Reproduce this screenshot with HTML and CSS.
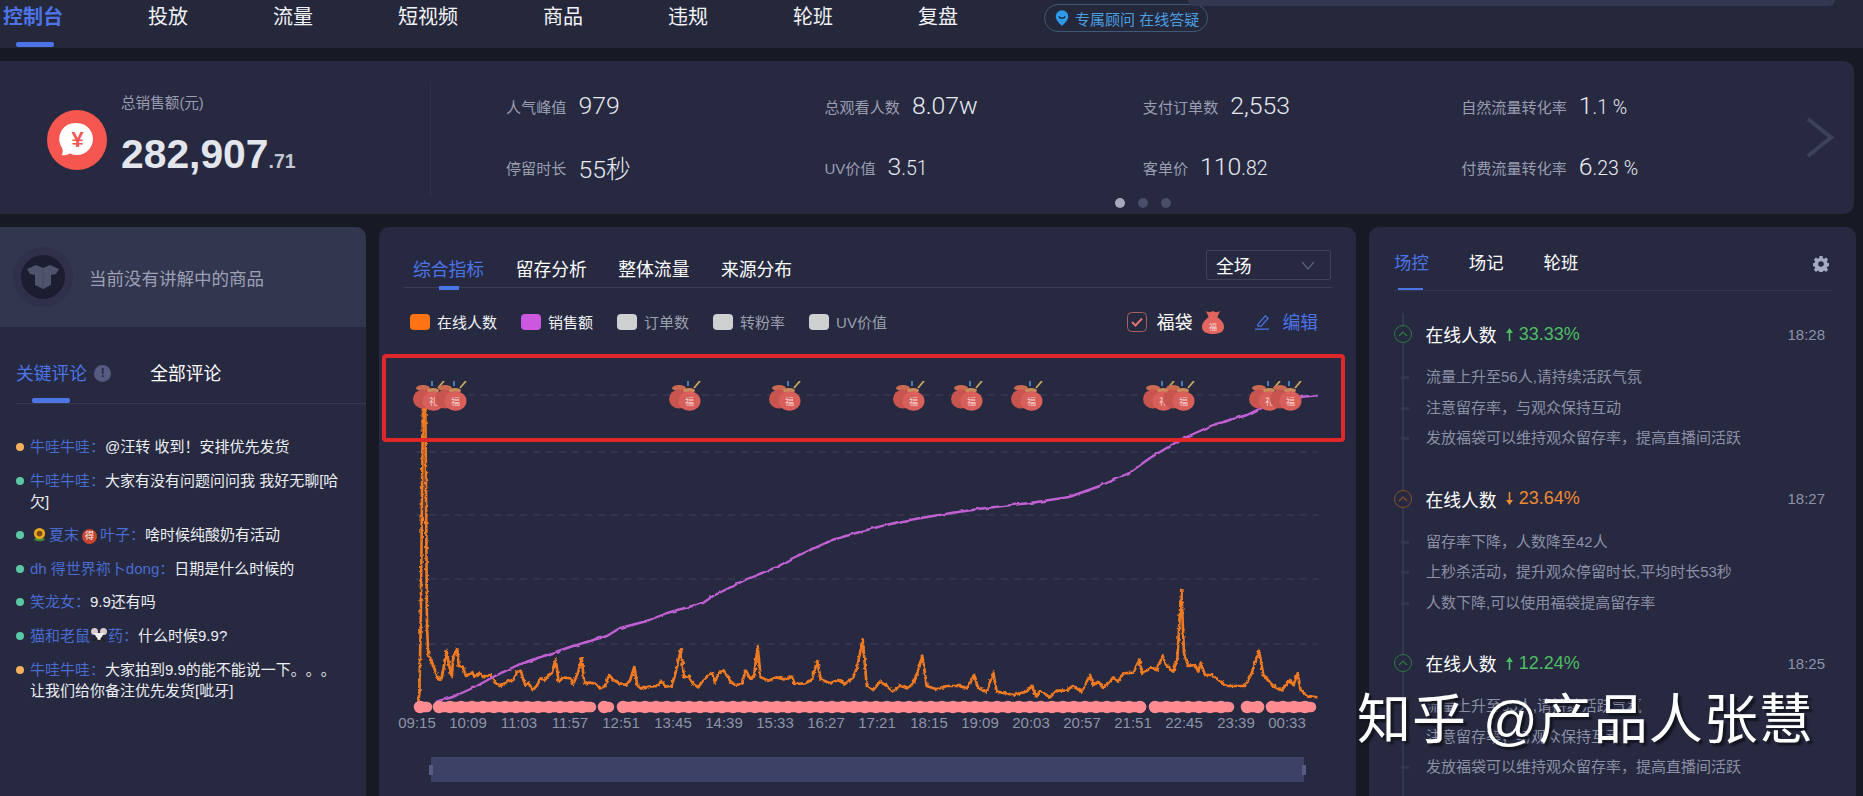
FILE: index.html
```html
<!DOCTYPE html>
<html lang="zh-CN">
<head>
  <meta charset="UTF-8">
  <meta name="viewport" content="width=device-width, initial-scale=1.0">
  <title>直播大屏 控制台</title>
  <link rel="stylesheet" href="styles.css">
</head>
<body>
  <!-- 顶部导航 -->
  <header class="topbar">
    <div class="search-strip"></div>
    <nav class="nav">
      <a class="nav-item active">控制台</a>
      <a class="nav-item">投放</a>
      <a class="nav-item">流量</a>
      <a class="nav-item">短视频</a>
      <a class="nav-item">商品</a>
      <a class="nav-item">违规</a>
      <a class="nav-item">轮班</a>
      <a class="nav-item">复盘</a>
      <div class="advisor">
        <svg class="advisor-icon" viewBox="0 0 18 22"><path d="M9 1a8 8 0 0 1 8 8c0 5-5 9-8 12C6 18 1 14 1 9a8 8 0 0 1 8-8z" fill="#2f9be8"/><path d="M5 9c1 3 7 3 8 0" fill="none" stroke="#123" stroke-width="1.6"/></svg>
        <span>专属顾问 在线答疑</span>
      </div>
    </nav>
  </header>

  <!-- 数据总览 -->
  <section class="stats">
    <div class="summary">
      <svg class="money-icon" viewBox="0 0 60 60">
        <circle cx="30" cy="30" r="30" fill="#f5564f"/>
        <path d="M30 13a16 16 0 1 1-7 30.4C20 45 17 45.500 14.500 45c1.500-2 1.500-4 .8-6.500A16 16 0 0 1 30 13z" fill="#fff"/>
        <text class="money-sign" x="30.500" y="37">¥</text>
      </svg>
      <div class="summary-text">
        <div class="summary-label">总销售额(元)</div>
        <div class="summary-value">282,907<small>.71</small></div>
      </div>
    </div>
    <div class="stat-grid">
      <div class="stat"><span class="stat-label">人气峰值</span><span class="stat-value">979</span></div>
      <div class="stat"><span class="stat-label">总观看人数</span><span class="stat-value">8.07w</span></div>
      <div class="stat"><span class="stat-label">支付订单数</span><span class="stat-value">2,553</span></div>
      <div class="stat"><span class="stat-label">自然流量转化率</span><span class="stat-value">1<small>.1 %</small></span></div>
      <div class="stat"><span class="stat-label">停留时长</span><span class="stat-value">55秒</span></div>
      <div class="stat"><span class="stat-label">UV价值</span><span class="stat-value">3<small>.51</small></span></div>
      <div class="stat"><span class="stat-label">客单价</span><span class="stat-value">110<small>.82</small></span></div>
      <div class="stat"><span class="stat-label">付费流量转化率</span><span class="stat-value">6<small>.23 %</small></span></div>
    </div>
    <svg class="stats-next" viewBox="0 0 28 41"><path d="M2 2l23 18.500L2 39" fill="none" stroke="#3e4259" stroke-width="4"/></svg>
    <div class="dots"><i class="on"></i><i></i><i></i></div>
  </section>

  <main class="panels">
    <!-- 左栏 评论 -->
    <aside class="panel panel-left">
      <div class="product-now">
        <div class="product-avatar">
          <svg viewBox="0 0 44 44"><path d="M6 14l9-4 7 3 7-3 9 4-3 5-5 1v10l-8 4-8-4V20l-5-1z" fill="#50536c"/><path d="M22 14v20" stroke="#45485f" stroke-width="1"/></svg>
        </div>
        <span>当前没有讲解中的商品</span>
      </div>
      <div class="comment-tabs">
        <span class="comment-tab active">关键评论</span>
        <span class="info-mark">!</span>
        <span class="comment-tab all">全部评论</span>
      </div>
      <ul class="comments">
        <li class="comment"><i class="mark orange"></i><p><span class="who">牛哇牛哇：</span>@汪转 收到！安排优先发货</p></li>
        <li class="comment"><i class="mark green"></i><p><span class="who">牛哇牛哇：</span>大家有没有问题问问我 我好无聊[哈欠]</p></li>
        <li class="comment"><i class="mark green"></i><p><span class="who"><svg class="emoji" viewBox="0 0 16 16"><path d="M2 13c3-2 9-2 12 0-2 3-10 3-12 0z" fill="#3f8a3a"/><circle cx="8" cy="7" r="6" fill="#e8a820"/><circle cx="8" cy="7" r="3" fill="#7a4a1c"/></svg>夏末<span class="badge">得</span>叶子：</span>啥时候纯酸奶有活动</p></li>
        <li class="comment"><i class="mark green"></i><p><span class="who">dh 得世界祢卜dong：</span>日期是什么时候的</p></li>
        <li class="comment"><i class="mark green"></i><p><span class="who">笑龙女：</span>9.9还有吗</p></li>
        <li class="comment"><i class="mark green"></i><p><span class="who">猫和老鼠<svg class="emoji mouse" viewBox="0 0 16 16"><circle cx="3.500" cy="4.500" r="3.500" fill="#d9c8cc"/><circle cx="12.500" cy="4.500" r="3.500" fill="#d9c8cc"/><path d="M3 6h10l-5 9z" fill="#f1ecee"/><path d="M2 14l4-3M14 14l-4-3" stroke="#222" stroke-width="2"/><circle cx="8" cy="14" r="1.200" fill="#222"/></svg>药：</span>什么时候9.9?</p></li>
        <li class="comment"><i class="mark orange"></i><p><span class="who">牛哇牛哇：</span>大家拍到9.9的能不能说一下。。。让我们给你备注优先发货[呲牙]</p></li>
      </ul>
    </aside>

    <!-- 中栏 图表 -->
    <section class="panel panel-chart">
      <div class="chart-tabs">
        <span class="chart-tab active">综合指标</span>
        <span class="chart-tab">留存分析</span>
        <span class="chart-tab">整体流量</span>
        <span class="chart-tab">来源分布</span>
        <div class="range-select">
          <span>全场</span>
          <svg viewBox="0 0 14 9"><path d="M1 1l6 7 6-7" fill="none" stroke="#5c6078" stroke-width="1.200"/></svg>
        </div>
      </div>
      <div class="legend">
        <span class="legend-item"><i class="swatch swatch-orange"></i><span class="legend-text">在线人数</span></span>
        <span class="legend-item"><i class="swatch swatch-purple"></i><span class="legend-text">销售额</span></span>
        <span class="legend-item off"><i class="swatch"></i><span class="legend-text">订单数</span></span>
        <span class="legend-item off"><i class="swatch"></i><span class="legend-text">转粉率</span></span>
        <span class="legend-item off"><i class="swatch"></i><span class="legend-text">UV价值</span></span>
        <span class="lucky">
          <svg class="check" viewBox="0 0 20 20"><rect x=".5" y=".5" width="19" height="19" rx="4" fill="none" stroke="#a5605f"/><path d="M5 10l3.500 3.500L15 6.500" fill="none" stroke="#e0746c" stroke-width="2"/></svg>
          <span class="legend-text">福袋</span>
          <svg class="lucky-bag" viewBox="0 0 22 24"><path d="M4 1c2 1.500 5 1.500 7 0 2 1.500 5 1.500 7 0l-3 7H7z" fill="#e0645c"/><path d="M7 7h8c5 3 7 7 7 10 0 5-5 7-11 7S0 22 0 17c0-3 2-7 7-10z" fill="#e2665f"/><text class="lucky-char" x="11" y="20">福</text></svg>
        </span>
        <span class="edit">
          <svg viewBox="0 0 16 17"><path d="M3 11L11 2l3 2.500L6.500 13H3zM0 16h15" fill="none" stroke="#4c74e6" stroke-width="1.300"/></svg>
          <span class="legend-text">编辑</span>
        </span>
      </div>

      <svg class="chart" viewBox="379 345 977 451">
        <defs>
          <filter id="jitter" filterUnits="userSpaceOnUse" x="379" y="345" width="977" height="451">
            <feTurbulence type="fractalNoise" baseFrequency=".28" numOctaves="2" seed="7"/>
            <feDisplacementMap in="SourceGraphic" scale="3.500" xChannelSelector="R" yChannelSelector="G"/>
          </filter>
          <filter id="jitter-soft" filterUnits="userSpaceOnUse" x="379" y="345" width="977" height="451">
            <feTurbulence type="fractalNoise" baseFrequency=".12" numOctaves="2" seed="3"/>
            <feDisplacementMap in="SourceGraphic" scale="3" xChannelSelector="R" yChannelSelector="G"/>
          </filter>
          <g id="bag-body">
            <path d="M19 0v5" stroke="#4a86c8" stroke-width="1.800" fill="none"/>
            <path d="M25 7l6-7" stroke="#c9a95e" stroke-width="1.800" fill="none"/>
            <ellipse cx="10" cy="7" rx="7" ry="3" fill="#cc6a52"/>
            <ellipse cx="10" cy="18" rx="10" ry="9.500" fill="#c8544f"/>
            <ellipse cx="20" cy="9.500" rx="6" ry="2.600" fill="#c98a5c"/>
            <ellipse cx="20.500" cy="20" rx="11" ry="9.800" fill="#d95f5a"/>
          </g>
          <symbol id="bag" viewBox="0 0 32 30"><use href="#bag-body"/><text class="bag-char" x="20.500" y="24">福</text></symbol>
          <symbol id="bag-li" viewBox="0 0 32 30"><use href="#bag-body"/><text class="bag-char" x="20.500" y="24">礼</text></symbol>
        </defs>

        <g class="grid-lines">
          <line x1="416" x2="1318" y1="395" y2="395"/>
          <line x1="416" x2="1318" y1="452" y2="452"/>
          <line x1="416" x2="1318" y1="515" y2="515"/>
          <line x1="416" x2="1318" y1="579" y2="579"/>
          <line x1="416" x2="1318" y1="644" y2="644"/>
        </g>

        <g filter="url(#jitter)">
          <g transform="translate(380 560) scale(.33333)">
            <polyline class="line-online" points="115,425 118,400 122,200 129,-465 136,-465 141,200 145,285 155,305 165,330 175,358 185,355 195,300 200,273 206,310 215,352 220,290 232,266 236,318 248,320 258,348 275,338 285,350 300,338 310,352 330,345 345,368 362,378 380,365 400,360 412,335 422,332 435,375 445,368 458,390 470,378 482,355 495,360 505,348 515,340 527,298 536,365 550,352 570,355 580,372 595,335 605,295 613,370 630,368 650,372 660,385 675,378 688,345 700,360 720,370 735,375 750,362 763,320 772,378 790,385 810,380 830,378 845,362 855,380 875,378 885,345 903,268 912,352 925,348 940,372 955,382 970,360 995,338 1005,368 1015,340 1030,330 1050,362 1065,375 1085,372 1097,330 1110,355 1122,350 1133,260 1142,352 1165,362 1190,352 1215,358 1235,350 1245,372 1275,370 1295,360 1312,303 1322,358 1350,370 1375,360 1395,372 1420,352 1432,320 1448,238 1460,375 1480,390 1500,365 1520,378 1540,395 1560,375 1580,385 1600,370 1615,330 1627,287 1640,378 1670,388 1700,378 1740,378 1762,385 1782,345 1795,385 1820,395 1840,338 1850,395 1880,400 1900,405 1940,395 1955,378 1970,410 1980,392 2010,412 2030,392 2060,392 2078,378 2105,395 2130,345 2140,375 2155,365 2170,385 2200,352 2215,365 2230,340 2260,338 2278,300 2287,340 2315,322 2330,330 2348,288 2360,318 2380,335 2392,295 2404,90 2412,280 2425,318 2445,315 2455,335 2462,308 2475,345 2495,345 2510,355 2540,378 2595,378 2615,340 2637,272 2650,345 2680,378 2705,392 2728,360 2740,375 2753,340 2762,392 2785,408 2812,412"/>
          </g>
        </g>
        <g filter="url(#jitter-soft)">
          <polyline class="line-sales" points="435,702 453,697 477,686 493,677 520,664 573,646 607,636 620,628 647,621 667,613 703,603 713,596 747,579 777,567 793,558 832,540 870,529 903,521 945,514 986,508 1030,503 1069,497 1100,486 1129,473 1150,458 1170,446 1180,440 1213,425 1247,415 1263,407 1302,397 1318,395"/>
        </g>

        <g class="strip">
          <path d="M420 707h7M439 707h152M604 707h5M623 707h518M1155 707h74M1247 707h12M1272 707h39"/>
        </g>
        <g class="strip-dots">
          <path d="M420 707h7M439 707h152M604 707h5M623 707h518M1155 707h74M1247 707h12M1272 707h39"/>
        </g>

        <g class="axis-labels">
          <text x="417" y="728">09:15</text>
          <text x="468" y="728">10:09</text>
          <text x="519" y="728">11:03</text>
          <text x="570" y="728">11:57</text>
          <text x="621" y="728">12:51</text>
          <text x="673" y="728">13:45</text>
          <text x="724" y="728">14:39</text>
          <text x="775" y="728">15:33</text>
          <text x="826" y="728">16:27</text>
          <text x="877" y="728">17:21</text>
          <text x="929" y="728">18:15</text>
          <text x="980" y="728">19:09</text>
          <text x="1031" y="728">20:03</text>
          <text x="1082" y="728">20:57</text>
          <text x="1133" y="728">21:51</text>
          <text x="1184" y="728">22:45</text>
          <text x="1236" y="728">23:39</text>
          <text x="1287" y="728">00:33</text>
        </g>

        <rect class="zoom-bar" x="431" y="757" width="873" height="25"/>
        <rect class="zoom-handle" x="429" y="765" width="4" height="10"/>
        <rect class="zoom-handle" x="1302" y="765" width="4" height="10"/>

        <use href="#bag-li" x="413" y="381" width="32" height="30"/>
        <use href="#bag" x="435" y="381" width="32" height="30"/>
        <use href="#bag" x="669" y="381" width="32" height="30"/>
        <use href="#bag" x="769" y="381" width="32" height="30"/>
        <use href="#bag" x="893" y="381" width="32" height="30"/>
        <use href="#bag" x="951" y="381" width="32" height="30"/>
        <use href="#bag" x="1011" y="381" width="32" height="30"/>
        <use href="#bag-li" x="1143" y="381" width="32" height="30"/>
        <use href="#bag" x="1163" y="381" width="32" height="30"/>
        <use href="#bag-li" x="1249" y="381" width="32" height="30"/>
        <use href="#bag" x="1270" y="381" width="32" height="30"/>
      </svg>
      <div class="highlight"></div>
    </section>

    <!-- 右栏 场控 -->
    <aside class="panel panel-right">
      <div class="side-tabs">
        <span class="side-tab active">场控</span>
        <span class="side-tab">场记</span>
        <span class="side-tab">轮班</span>
        <svg class="gear" viewBox="0 0 16 16"><path d="M6.500 0h3l.4 2.200 1.300.6L13.100 1.500l2 2.200-1.300 1.800.5 1.300 2 .4v3l-2 .4-.5 1.300 1.300 1.800-2 2.200-1.900-1.300-1.300.6-.4 2.200h-3l-.4-2.200-1.300-.6-1.900 1.300-2-2.200 1.300-1.800-.5-1.300-2-.4v-3l2-.4.5-1.300L.9 3.700l2-2.200 1.900 1.300 1.300-.6zM8 5.200a2.800 2.800 0 1 0 0 5.600 2.800 2.800 0 0 0 0-5.600z" fill="#a6a9c2" fill-rule="evenodd"/></svg>
      </div>
      <div class="timeline">
        <article class="event up">
          <header class="event-head">
            <span class="event-icon"><svg viewBox="0 0 10 6"><path d="M1 5l4-4 4 4" fill="none" stroke="currentColor" stroke-width="1.200"/></svg></span>
            <span class="event-title">在线人数</span>
            <svg class="event-arrow" viewBox="0 0 7 13"><path d="M3.500 0L7 5H4.300v8H2.700V5H0z" fill="currentColor"/></svg>
            <span class="event-change">33.33%</span>
            <time class="event-time">18:28</time>
          </header>
          <p class="event-line">流量上升至56人,请持续活跃气氛</p>
          <p class="event-line">注意留存率，与观众保持互动</p>
          <p class="event-line">发放福袋可以维持观众留存率，提高直播间活跃</p>
        </article>
        <article class="event down">
          <header class="event-head">
            <span class="event-icon"><svg viewBox="0 0 10 6"><path d="M1 5l4-4 4 4" fill="none" stroke="currentColor" stroke-width="1.200"/></svg></span>
            <span class="event-title">在线人数</span>
            <svg class="event-arrow" viewBox="0 0 7 13"><path d="M3.500 13L7 8H4.300V0H2.700v8H0z" fill="currentColor"/></svg>
            <span class="event-change">23.64%</span>
            <time class="event-time">18:27</time>
          </header>
          <p class="event-line">留存率下降，人数降至42人</p>
          <p class="event-line">上秒杀活动，提升观众停留时长,平均时长53秒</p>
          <p class="event-line">人数下降,可以使用福袋提高留存率</p>
        </article>
        <article class="event up">
          <header class="event-head">
            <span class="event-icon"><svg viewBox="0 0 10 6"><path d="M1 5l4-4 4 4" fill="none" stroke="currentColor" stroke-width="1.200"/></svg></span>
            <span class="event-title">在线人数</span>
            <svg class="event-arrow" viewBox="0 0 7 13"><path d="M3.500 0L7 5H4.300v8H2.700V5H0z" fill="currentColor"/></svg>
            <span class="event-change">12.24%</span>
            <time class="event-time">18:25</time>
          </header>
          <p class="event-line">流量上升至55人,请持续活跃气氛</p>
          <p class="event-line">注意留存率，与观众保持互动</p>
          <p class="event-line">发放福袋可以维持观众留存率，提高直播间活跃</p>
        </article>
      </div>
    </aside>
  </main>

  <div class="watermark">知乎 @产品人张慧</div>
</body>
</html>
```

FILE: styles.css
```css
* {
  box-sizing: border-box;
}
html, body {
  height: 796px;
  overflow: hidden;
}
body {
  margin: 0;
  position: relative;
  background-color: #171924;
  color: #fff;
  font-family: "Liberation Sans", "Noto Sans CJK SC", sans-serif;
  text-spacing-trim: space-all;
}
p, ul {
  margin: 0;
  padding: 0;
}

/* 顶部导航 */
.topbar {
  position: relative;
  height: 48px;
  background-color: #25283b;
}
.search-strip {
  position: absolute;
  left: 1188px;
  top: 0;
  width: 647px;
  height: 6px;
  background-color: #333850;
  border-radius: 0 0 6px 6px;
}
.nav {
  display: flex;
  align-items: center;
  gap: 85px;
  height: 34px;
  padding-left: 3px;
}
.nav-item {
  position: relative;
  font-size: 20px;
  line-height: 34px;
  color: #f2f3f7;
}
.nav-item.active {
  color: #4c74e6;
  font-weight: 700;
}
.nav-item.active::after {
  content: "";
  position: absolute;
  left: 13px;
  top: 42px;
  width: 38px;
  height: 5px;
  border-radius: 2px;
  background-color: #4c74e6;
}
.advisor {
  display: flex;
  align-items: center;
  gap: 6px;
  width: 164px;
  height: 28px;
  margin-top: 2px;
  margin-left: 1px;
  padding-left: 10px;
  border: 1px solid #3f5876;
  border-radius: 14px;
  font-size: 15px;
  color: #4a9fe0;
  white-space: nowrap;
}
.advisor-icon {
  width: 14px;
  height: 18px;
  flex: none;
}

/* 数据总览 */
.stats {
  position: relative;
  display: flex;
  align-items: flex-start;
  width: 1854px;
  height: 153px;
  margin-top: 13px;
  padding-top: 14px;
  background-color: #262940;
  border-radius: 0 10px 10px 0;
}
.summary {
  display: flex;
  align-items: center;
  gap: 14px;
  width: 431px;
  height: 115px;
  margin-top: 7px;
  padding-left: 47px;
  border-right: 1px solid #2f3249;
}
.money-icon {
  width: 60px;
  height: 60px;
  flex: none;
}
.money-sign {
  font-size: 22px;
  font-weight: 700;
  fill: #f5564f;
  text-anchor: middle;
}
.summary-text {
  align-self: flex-start;
  margin-top: 11px;
}
.summary-label {
  font-size: 14.6px;
  line-height: 20px;
  color: #9a9db0;
}
.summary-value {
  margin-top: 18px;
  font-size: 40.8px;
  line-height: 46px;
  font-weight: 700;
  color: #e4e6ee;
}
.summary-value small {
  font-size: 19.5px;
  color: #c5c8d4;
}
.stat-grid {
  display: grid;
  grid-template-columns: repeat(4, 318.4px);
  grid-auto-rows: 61px;
  flex: none;
  margin-left: 75px;
}
.stat {
  display: flex;
  align-items: center;
  gap: 12px;
}
.stat-label {
  font-size: 15.1px;
  color: #9a9db0;
}
.stat-value {
  font-family: Roboto, "Noto Sans CJK SC", sans-serif;
  font-size: 24.8px;
  font-weight: 300;
  color: #e8eaf2;
}
.stat-value small {
  font-size: 19.5px;
}
.stats-next {
  width: 28px;
  height: 41px;
  flex: none;
  align-self: center;
  margin: -14px 0 0 26px;
}
.dots {
  position: absolute;
  left: 1115px;
  top: 137px;
  display: flex;
  gap: 13px;
}
.dots i {
  width: 10px;
  height: 10px;
  border-radius: 50%;
  background-color: #494d68;
}
.dots i.on {
  background-color: #a6a9bb;
}

/* 三栏 */
.panels {
  display: flex;
  gap: 13px;
  height: 569px;
  margin-top: 13px;
}
.panel {
  height: 569px;
  background-color: #262940;
  overflow: hidden;
}

/* 左栏 */
.panel-left {
  width: 366px;
  border-radius: 0 10px 0 0;
}
.product-now {
  display: flex;
  align-items: center;
  gap: 16px;
  height: 100px;
  padding-left: 13px;
  background-color: #32364f;
  font-size: 17.5px;
  color: #9da0b5;
}
.product-avatar {
  display: flex;
  align-items: center;
  justify-content: center;
  width: 60px;
  height: 60px;
  border-radius: 50%;
  background-color: #2e3149;
}
.product-avatar svg {
  width: 44px;
  height: 44px;
  border-radius: 50%;
  background-color: #1b1e30;
}
.comment-tabs {
  display: flex;
  align-items: flex-end;
  height: 77px;
  margin-left: 16px;
  padding-bottom: 17px;
  border-bottom: 1px solid #353850;
}
.comment-tab {
  position: relative;
  font-size: 17.8px;
  line-height: 24px;
  color: #fff;
}
.comment-tab.active {
  color: #4c74e6;
}
.comment-tab.active::after {
  content: "";
  position: absolute;
  left: 16px;
  bottom: -17px;
  width: 38px;
  height: 5px;
  border-radius: 2px;
  background-color: #4c74e6;
}
.comment-tab.all {
  margin-left: 39px;
}
.info-mark {
  width: 17px;
  height: 17px;
  margin: 0 0 4px 7px;
  border-radius: 50%;
  background-color: #565a80;
  color: #25283b;
  font-size: 12px;
  font-weight: 700;
  line-height: 17px;
  text-align: center;
}
.comments {
  list-style: none;
  margin-top: 32px;
  padding: 0 24px 0 16px;
}
.comment {
  display: flex;
  gap: 6px;
  margin-bottom: 12.6px;
  font-size: 15px;
  line-height: 21px;
  color: #eceef3;
}
.comment p {
  flex: 1;
}
.mark {
  flex: none;
  width: 8px;
  height: 8px;
  margin-top: 7px;
  border-radius: 50%;
}
.mark.orange {
  background-color: #f4b05f;
}
.mark.green {
  background-color: #5cc7a6;
}
.who {
  color: #4a6bd0;
}
.emoji {
  width: 15px;
  height: 15px;
  margin: 0 2px;
  vertical-align: -2px;
}
.emoji.mouse {
  width: 18px;
  height: 16px;
  margin: 0;
}
.badge {
  display: inline-block;
  width: 15px;
  height: 15px;
  margin: 0 3px;
  border-radius: 50%;
  background-color: #c8452f;
  color: #fff;
  font-size: 9px;
  line-height: 15px;
  text-align: center;
  vertical-align: 1px;
}

/* 中栏 */
.panel-chart {
  position: relative;
  width: 977px;
  border-radius: 10px 10px 0 0;
}
.chart-tabs {
  display: flex;
  align-items: flex-end;
  gap: 31.5px;
  height: 61px;
  margin: 0 24px 0 25px;
  padding: 0 1px 5px 9px;
  border-bottom: 1px solid #3a3d55;
}
.chart-tab {
  position: relative;
  font-size: 17.8px;
  line-height: 24px;
  color: #fff;
}
.chart-tab.active {
  color: #4c74e6;
}
.chart-tab.active::after {
  content: "";
  position: absolute;
  left: 26px;
  bottom: -8px;
  width: 20px;
  height: 4px;
  background-color: #4c74e6;
}
.range-select {
  display: flex;
  align-items: center;
  justify-content: space-between;
  width: 125px;
  height: 30px;
  margin: 0 0 2px auto;
  padding: 0 15px 0 9px;
  border: 1px solid #3f4258;
  border-radius: 2px;
  font-size: 17.8px;
}
.range-select svg {
  width: 14px;
  height: 9px;
}
.legend {
  display: flex;
  align-items: center;
  height: 36px;
  margin: 16px 38px 5px 31px;
}
.legend-item {
  display: flex;
  align-items: center;
  gap: 7px;
  margin-right: 24px;
  font-size: 15px;
  color: #f2f3f7;
}
.legend-item.off {
  color: #9c9fae;
}
.legend-text {
  padding-bottom: 2px;
}
.swatch {
  width: 20px;
  height: 16px;
  border-radius: 4px;
  background-color: #cfd0d2;
}
.swatch-orange {
  background-color: #ff7314;
}
.swatch-purple {
  background-color: #cc58e0;
}
.lucky {
  display: flex;
  align-items: center;
  gap: 10px;
  margin-left: auto;
  font-size: 17.8px;
}
.check {
  width: 20px;
  height: 20px;
}
.lucky-bag {
  width: 22px;
  height: 24px;
}
.lucky-char {
  font-size: 8px;
  fill: #f8d8d4;
  text-anchor: middle;
}
.edit {
  display: flex;
  align-items: center;
  gap: 12px;
  margin-left: 31px;
  font-size: 17.8px;
  color: #4c74e6;
}
.edit svg {
  width: 15px;
  height: 16px;
}
.chart {
  display: block;
  width: 977px;
  height: 451px;
}
.grid-lines line {
  stroke: #3d4058;
  stroke-width: 1;
  stroke-dasharray: 7 6;
}
.line-online {
  fill: none;
  stroke: #f07a22;
  stroke-width: 8;
  stroke-linejoin: round;
}
.line-sales {
  fill: none;
  stroke: #c060d2;
  stroke-width: 2.4;
  stroke-linejoin: round;
}
.strip path {
  fill: none;
  stroke: #fb8a90;
  stroke-width: 10.5;
  stroke-linecap: round;
}
.strip-dots path {
  fill: none;
  stroke: #ff8c90;
  stroke-width: 12.5;
  stroke-linecap: round;
  stroke-dasharray: 0 11;
}
.axis-labels text {
  font-size: 15px;
  fill: #8f93a8;
  text-anchor: middle;
}
.zoom-bar {
  fill: #3d4166;
}
.zoom-handle {
  fill: #565a85;
}
.bag-char {
  font-size: 9px;
  fill: #f6d6d2;
  text-anchor: middle;
}
.highlight {
  position: absolute;
  left: 3px;
  top: 127px;
  width: 963px;
  height: 88px;
  border: 4px solid #e0272a;
  border-radius: 4px;
}

/* 右栏 */
.panel-right {
  width: 487px;
  padding: 0 24px 0 25px;
  border-radius: 10px 10px 0 0;
}
.side-tabs {
  display: flex;
  align-items: flex-end;
  gap: 40px;
  height: 64px;
  padding: 0 3px 15px 0;
  border-bottom: 1px solid #31344a;
}
.side-tab {
  position: relative;
  font-size: 17.4px;
  line-height: 24px;
}
.side-tab.active {
  color: #4c74e6;
}
.side-tab.active::after {
  content: "";
  position: absolute;
  left: 4px;
  bottom: -15px;
  width: 25px;
  height: 2px;
  background-color: #4c74e6;
}
.gear {
  width: 16px;
  height: 16px;
  margin-left: auto;
  margin-bottom: 3px;
}
.timeline {
  position: relative;
  margin-top: 31px;
}
.timeline::before {
  content: "";
  position: absolute;
  left: 8px;
  top: -9px;
  bottom: -60px;
  width: 2px;
  background-color: #33374e;
}
.event {
  position: relative;
  margin-bottom: 33px;
  padding-left: 32px;
}
.event-head {
  display: flex;
  align-items: center;
  height: 24px;
  margin: 0 7px 16px -32px;
}
.event-icon {
  display: flex;
  align-items: center;
  justify-content: center;
  width: 18px;
  height: 18px;
  margin-right: 13.500px;
  border: 1px solid currentColor;
  border-radius: 50%;
  background-color: #262940;
}
.event-icon svg {
  width: 10px;
  height: 6px;
}
.event-title {
  font-size: 17.8px;
  margin-right: 9px;
}
.event-arrow {
  width: 7px;
  height: 13px;
  margin-right: 6px;
}
.event-change {
  font-size: 18px;
}
.event-time {
  margin-left: auto;
  font-size: 15px;
  color: #8f93a8;
}
.event.up .event-icon {
  color: #2f7a3f;
}
.event.up .event-arrow,
.event.up .event-change {
  color: #4ebd63;
}
.event.down .event-icon {
  color: #8a5028;
}
.event.down .event-arrow,
.event.down .event-change {
  color: #ee8a32;
}
.event-line {
  position: relative;
  font-size: 15px;
  line-height: 30.5px;
  color: #8c90a6;
}
.event-line::before {
  content: "";
  position: absolute;
  left: -25px;
  top: 14px;
  width: 8px;
  height: 3px;
  background-color: #33374e;
}

/* 水印 */
.watermark {
  position: absolute;
  left: 1357px;
  top: 684px;
  font-size: 54px;
  line-height: 72px;
  letter-spacing: 1px;
  white-space: nowrap;
  color: #fff;
  text-shadow: 3px 3px 2px #14151f;
}
```
